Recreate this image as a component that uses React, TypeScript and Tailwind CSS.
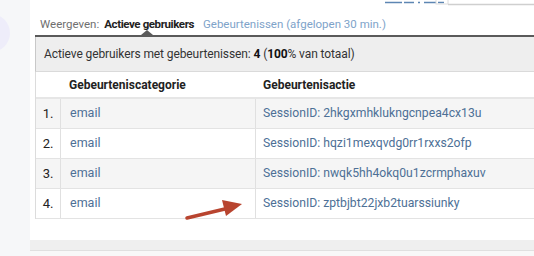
import React from "react";

const rows = [
  { n: "1.", cat: "email", act: "SessionID: 2hkgxmhklukngcnpea4cx13u" },
  { n: "2.", cat: "email", act: "SessionID: hqzi1mexqvdg0rr1rxxs2ofp" },
  { n: "3.", cat: "email", act: "SessionID: nwqk5hh4okq0u1zcrmphaxuv" },
  { n: "4.", cat: "email", act: "SessionID: zptbjbt22jxb2tuarssiunky" },
];

function Arrow() {
  return (
    <svg className="absolute left-[118px] top-0" width="70" height="34" viewBox="0 0 70 34">
      <line x1="8" y1="29" x2="50" y2="19" stroke="#b8442f" strokeWidth="3.5" strokeLinecap="round" />
      <polygon points="63,15 43,11 47,27" fill="#b8442f" />
    </svg>
  );
}

export default function App() {
  return (
    <div className="w-[534px] h-[256px] overflow-hidden flex bg-[#f6f7f9] font-['Roboto',sans-serif]">
      <div className="w-[30px] relative">
        <div className="absolute left-[-28px] top-[14px] w-[38px] h-[38px] rounded-full bg-[#eeedfa]"></div>
      </div>

      <div className="flex-1 flex flex-col">
        <div className="bg-white pl-[5px] h-[240px] flex flex-col">
          {/* chart remnant */}
          <div className="h-[12px] relative">
            <svg className="absolute left-[345px] top-0" width="170" height="8" viewBox="0 0 170 8">
              <line x1="5" y1="2.5" x2="22" y2="2.5" stroke="#5d86b3" strokeWidth="1.5" />
              <line x1="24" y1="2.5" x2="34" y2="2.5" stroke="#5d86b3" strokeWidth="1.5" />
              <line x1="38" y1="2.5" x2="40" y2="2.5" stroke="#5d86b3" strokeWidth="1.5" />
              <line x1="44" y1="2.5" x2="56" y2="2.5" stroke="#5d86b3" strokeWidth="1.5" />
              <line x1="58" y1="2.5" x2="64" y2="2.5" stroke="#5d86b3" strokeWidth="1.5" />
              <rect x="56" y="-2" width="12" height="6" fill="none" stroke="#dcdcdc" />
              <line x1="68" y1="4.5" x2="170" y2="4.5" stroke="#cfcfcf" strokeWidth="1.5" />
            </svg>
          </div>

          {/* tab row */}
          <div className="h-[23px] flex items-center gap-[5px] pl-[5px] pt-[2px] text-[11.5px] leading-none">
            <span className="text-[#6f6f6f]">Weergeven:</span>
            <span className="font-bold text-[#222] tracking-[-0.4px]">Actieve gebruikers</span>
            <span className="text-[#7ea3c9] ml-[4px]">Gebeurtenissen (afgelopen 30 min.)</span>
          </div>
          <div className="relative h-[2px] bg-[#5a5a5a]">
            <div className="absolute left-[106px] top-[-5px] w-0 h-0 border-l-[6px] border-r-[6px] border-b-[5px] border-l-transparent border-r-transparent border-b-[#5a5a5a]"></div>
          </div>

          {/* summary */}
          <div className="h-[35px] bg-[#eeeeee] border-l border-[#c8c8c8] border-b border-b-[#dadada] flex items-center pl-[8px] text-[12px] text-[#333] tracking-[-0.1px]">
            <span>
              Actieve gebruikers met gebeurtenissen: <span className="font-bold text-[#111]">4</span> (<span className="font-bold text-[#111]">100</span>% van totaal)
            </span>
          </div>

          {/* table */}
          <div className="border-l border-[#dcdcdc] text-[12px]">
            <div className="h-[27px] flex items-center border-b-2 border-[#e6e6e6] font-bold text-[#222]">
              <div className="w-[25px]"></div>
              <div className="w-[195px] pl-[8px]">Gebeurteniscategorie</div>
              <div className="pl-[7px]">Gebeurtenisactie</div>
            </div>
            {rows.map((r, i) => (
              <div
                key={r.n}
                className={`h-[30px] flex items-stretch border-b border-[#e3e3e3] ${i % 2 === 0 ? "bg-[#f5f5f5]" : "bg-white"}`}
              >
                <div className="w-[25px] flex items-center justify-center border-r border-[#e0e0e0] text-[#222] text-[13px]">{r.n}</div>
                <div className="w-[195px] flex items-center pl-[9px] border-r border-[#e0e0e0] text-[#4d7096] text-[12.5px] relative">
                  {r.cat}
                  {i === 3 && <Arrow />}
                </div>
                <div className="flex items-center pl-[7px] text-[#4d7096] text-[12.2px]">{r.act}</div>
              </div>
            ))}
          </div>
        </div>
        <div className="h-[11px] bg-[#efefef] border-b border-[#e0e0e0]"></div>
        <div className="flex-1 bg-[#f8f8f8]"></div>
      </div>
    </div>
  );
}
